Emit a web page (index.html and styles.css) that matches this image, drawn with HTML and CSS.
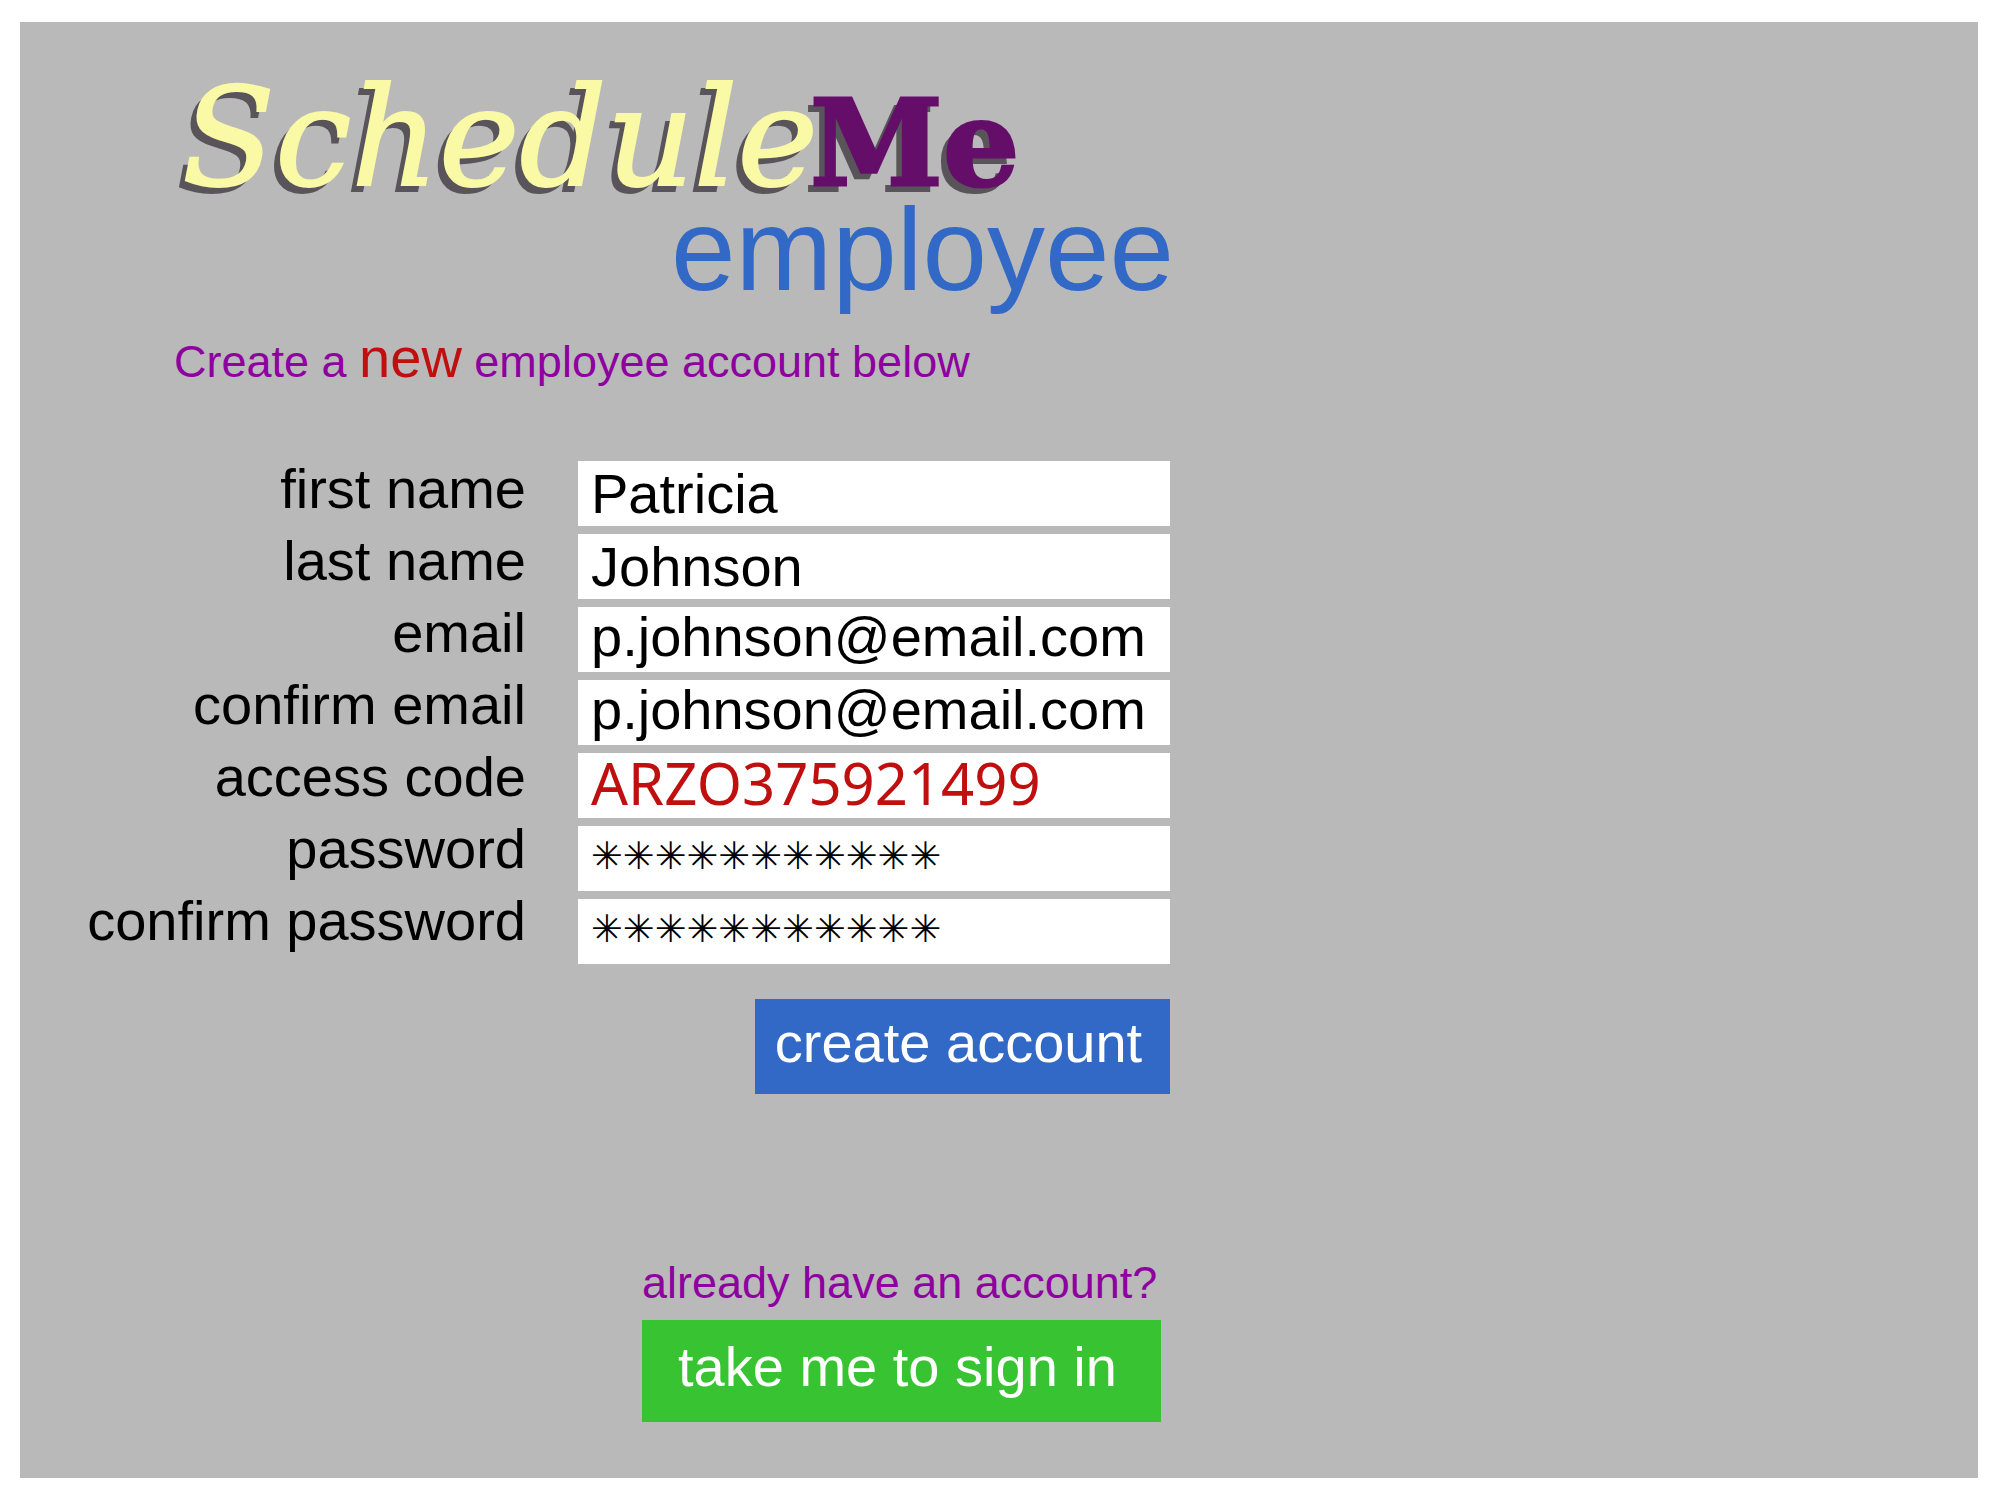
FILE: index.html
```html
<!DOCTYPE html>
<html lang="en">
<head>
<meta charset="utf-8">
<title>ScheduleMe – create employee account</title>
<link rel="stylesheet" href="styles.css">
</head>
<body>
<main class="panel">
  <div class="content">
    <header class="header">
      <h1 class="logo">Schedule<span class="logo-slab">Me</span></h1>
      <p class="role">employee</p>
      <p class="tagline">Create a <em class="tagline-new">new</em> employee account below</p>
    </header>
    <form class="form">
      <div class="form-columns">
        <div class="labels">
          <label for="first-name">first name</label>
          <label for="last-name">last name</label>
          <label for="email">email</label>
          <label for="confirm-email">confirm email</label>
          <label for="access-code">access code</label>
          <label for="password">password</label>
          <label for="confirm-password">confirm password</label>
        </div>
        <div class="fields">
          <input class="field field-name" id="first-name" type="text" value="Patricia">
          <input class="field field-name" id="last-name" type="text" value="Johnson">
          <input class="field" id="email" type="email" value="p.johnson@email.com">
          <input class="field" id="confirm-email" type="email" value="p.johnson@email.com">
          <input class="field field-code" id="access-code" type="text" value="ARZO375921499">
          <input class="field field-secret" id="password" type="text" value="✳✳✳✳✳✳✳✳✳✳✳">
          <input class="field field-secret" id="confirm-password" type="text" value="✳✳✳✳✳✳✳✳✳✳✳">
        </div>
      </div>
      <button class="button button-create" type="submit">create account</button>
    </form>
    <section class="signin">
      <p class="signin-hint">already have an account?</p>
      <button class="button button-signin" type="button">take me to sign in</button>
    </section>
  </div>
</main>
</body>
</html>
```
FILE: styles.css
```css
* {
  box-sizing: border-box;
}

body {
  margin: 0;
  padding: 22px 22px 22px 20px;
  min-height: 100vh;
  display: flex;
  background: #fff;
  color: #000;
  font-family: "Liberation Sans", Arial, sans-serif;
  font-size: 56px;
}

h1,
p {
  margin: 0;
}

.panel {
  flex: 1;
  background: #b9b9b9;
  padding: 62px 0 40px;
}

.content {
  width: 100%;
  max-width: 1150px;
}

.header {
  padding-left: 154px;
}

.logo {
  padding-left: 8px;
  font-family: "DejaVu Serif", serif;
  font-style: italic;
  font-weight: 400;
  font-size: 136px;
  line-height: 108px;
  white-space: nowrap;
  color: #f9f9a6;
  -webkit-text-stroke: 2px #f9f9a6;
  text-shadow: -7px 7px 0 #585459;
}

.logo-slab {
  margin-left: -8px;
  font-style: normal;
  font-weight: 700;
  font-size: 120px;
  line-height: 80px;
  color: #640e6a;
  -webkit-text-stroke: 3px #640e6a;
}

.role {
  margin-right: -4px;
  font-size: 116px;
  line-height: 116px;
  text-align: right;
  color: #3268c6;
}

.tagline {
  margin-top: 26px;
  font-size: 45px;
  line-height: 56px;
  color: #8f00a0;
}

.tagline-new {
  font-style: normal;
  font-size: 56px;
  line-height: 40px;
  color: #c00f0f;
}

.form {
  margin-top: 63px;
  display: flex;
  flex-direction: column;
}

.form-columns {
  display: flex;
  justify-content: flex-end;
  gap: 52px;
}

.labels {
  display: flex;
  flex-direction: column;
  line-height: 72px;
  text-align: right;
}

.fields {
  width: 592px;
  padding-top: 8px;
  display: flex;
  flex-direction: column;
  gap: 8px;
}

.field {
  width: 100%;
  height: 65px;
  border: 0;
  padding: 0 0 6px 13px;
  background: #fff;
  color: #000;
  font-family: inherit;
  font-size: 56px;
}

.field-name {
  padding-bottom: 0;
}

.field-code {
  font-family: "Noto Sans", sans-serif;
  font-size: 58px;
  color: #c00f0f;
}

.field-secret {
  font-family: "DejaVu Sans", sans-serif;
  font-size: 38px;
}

.button {
  border: 0;
  color: #fff;
  font-family: inherit;
  font-size: 56px;
  white-space: nowrap;
}

.button-create {
  align-self: flex-end;
  margin-top: 35px;
  width: 415px;
  height: 95px;
  padding: 0 8px 8px 0;
  background: #3268c6;
}

.signin {
  width: 528px;
  margin: 161px 0 0 auto;
}

.signin-hint {
  margin-bottom: 10px;
  font-size: 45px;
  line-height: 55px;
  color: #8f00a0;
}

.button-signin {
  display: block;
  width: 519px;
  height: 102px;
  padding: 0 8px 10px 0;
  background: #38c432;
}
```
